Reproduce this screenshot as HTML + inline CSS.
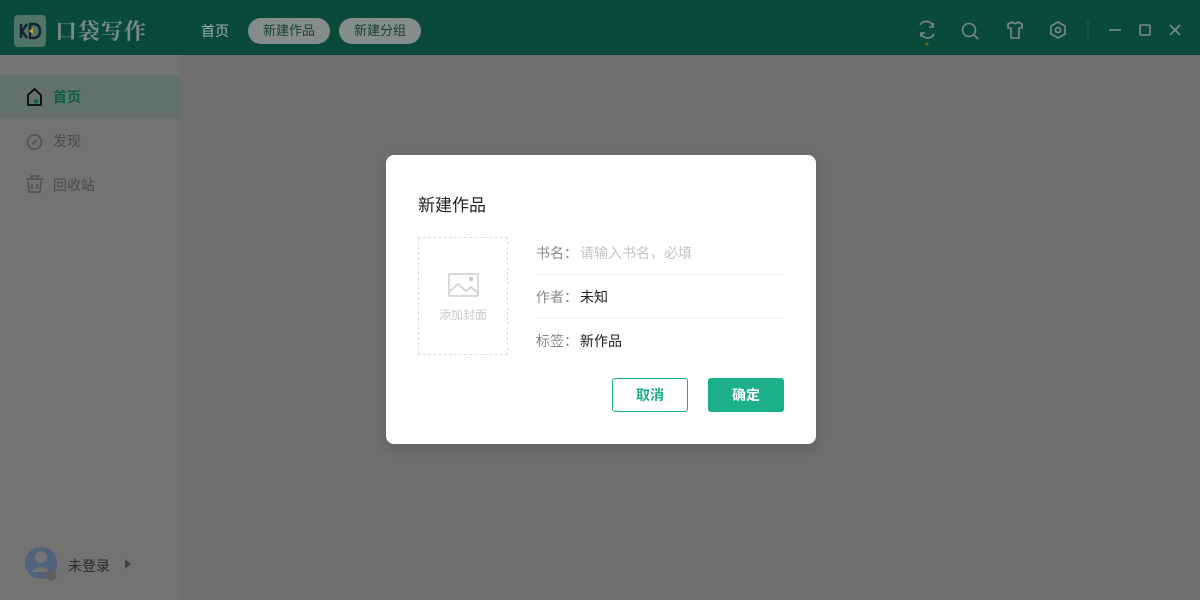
<!DOCTYPE html>
<html><head><meta charset="utf-8"><style>
*{margin:0;padding:0;box-sizing:border-box}
body{width:1200px;height:600px;overflow:hidden;font-family:"Liberation Sans","Noto Sans CJK SC",sans-serif;background:#6f6f71;position:relative}
.hdr{position:absolute;left:0;top:0;width:1200px;height:55px;background:#0a4a3b}
.logo{position:absolute;left:14px;top:15px;width:32px;height:32px;border-radius:4px;background:#4e7568}
.title{position:absolute;left:55px;top:15px;font-family:"Noto Serif CJK SC",serif;font-size:22px;color:#7a8c86;font-weight:bold;letter-spacing:1px}
.nav{position:absolute;top:18px;font-size:14px;color:#a3aeaa;line-height:26px}
.pill{background:#858d8a;color:#163f34;border-radius:13px;padding:0 15px;font-size:13px;height:26px}
.side{position:absolute;left:0;top:55px;width:179px;height:545px;background:#737373}
.item{position:absolute;left:0;width:179px;height:44px;font-size:14px;color:#4a4a4a;line-height:44px;padding-left:53px}
.item.act{background:#62716c;color:#0b5c43;font-weight:bold}
.modal{position:absolute;left:386px;top:155px;width:430px;height:289px;background:#fff;border-radius:8px;box-shadow:0 4px 16px rgba(0,0,0,.15)}
.mt{position:absolute;left:32px;top:36px;font-size:17px;color:#222}
.cover{position:absolute;left:32px;top:82px;width:90px;height:118px;border:1px dashed #ddd}
.row{position:absolute;left:150px;width:248px;height:44px;border-bottom:1px solid #eee;font-size:14px;line-height:44px;color:#888}
.row span{color:#222;margin-left:2px}
.btn{position:absolute;top:223px;width:76px;height:34px;border-radius:3px;font-size:14px;font-weight:bold;text-align:center;line-height:32px}
</style></head><body>
<div class="hdr">
 <div class="logo"><svg width="32" height="32" fill="none" stroke="#142230" stroke-width="2.4"><path d="M7 9 L7 23 M13 9 L8 16 L13 23"/><path d="M16 9 L19 9 Q26 9 26 16 Q26 23 19 23 L16 23 Z"/><path d="M15 16 L19 13 L19 19 Z" fill="#c89a3a" stroke="none"/></svg></div>
 <div class="title">口袋写作</div>
 <div class="nav" style="left:201px">首页</div>
 <div class="nav pill" style="left:248px">新建作品</div>
 <div class="nav pill" style="left:339px">新建分组</div>
 <svg style="position:absolute;left:900px;top:0" width="300" height="55" fill="none" stroke="#7c8a85" stroke-width="1.6">
  <path d="M20 25 A7 7 0 0 1 33 27 M34 34 A7 7 0 0 1 21 33 M33 23 L33 27 L29 27 M21 37 L21 33 L25 33"/>
  <circle cx="27" cy="44" r="1.5" fill="#8a5e0e" stroke="none"/>
  <circle cx="69" cy="30" r="6.5"/><path d="M74 35 L78 39"/>
  <path d="M108 24 L112 22 Q115 25 118 22 L122 24 L122 28 L119 28 L119 38 L111 38 L111 28 L108 28 Z"/>
  <path d="M158 22 L165 26 L165 34 L158 38 L151 34 L151 26 Z"/><circle cx="158" cy="30" r="2.5"/>
  <path d="M188 20 L188 40" stroke="#285f50" stroke-width="1"/>
  <path d="M209 30 L221 30"/><rect x="240" y="25" width="10" height="10" rx="1"/><path d="M270 25 L280 35 M280 25 L270 35"/>
 </svg>
</div>
<div class="side">
 <div class="item act" style="top:20px">首页</div>
 <div class="item" style="top:64px">发现</div>
 <div class="item" style="top:108px">回收站</div>
 <svg style="position:absolute;left:0;top:0" width="179" height="545" fill="none" stroke-width="1.8">
  <path d="M28 40 L34.5 34 L41 40 L41 50 L28 50 Z" stroke="#0a0a0a"/><circle cx="36" cy="46.5" r="2" fill="#0b5c43" stroke="none"/>
  <circle cx="34.5" cy="87" r="7" stroke="#555"/><path d="M32 89 L37 85" stroke="#555"/>
  <path d="M26 124 L43 124 M31 124 L31 121 L38 121 L38 124 M28 126 L29 137 L40 137 L41 126 M32 129 L32 134 M37 129 L37 134" stroke="#555"/>
  <circle cx="41" cy="508" r="16" fill="#51627c" stroke="none"/>
  <circle cx="41" cy="502" r="6" fill="#737373" stroke="none"/>
  <path d="M31 517 Q41 507 51 517" fill="#737373" stroke="none"/>
  <circle cx="51" cy="520" r="5.5" fill="#5f5f5f" stroke="none"/>
  <path d="M125 504 L131 509 L125 514 Z" fill="#444" stroke="none"/>
 </svg>
 <div style="position:absolute;left:68px;top:501px;font-size:14px;color:#2a2a2a">未登录</div>
</div>
<div class="modal">
 <div class="mt">新建作品</div>
 <div class="cover">
  <svg style="position:absolute;left:29px;top:33px" width="32" height="28" fill="none" stroke="#ccc" stroke-width="1.5"><rect x="1" y="3" width="29" height="22" rx="1"/><path d="M1 21 L10 13 L18 20 L23 16 L30 22"/><circle cx="23" cy="8" r="1.5" fill="#ccc"/></svg>
  <div style="position:absolute;left:0;top:68px;width:88px;text-align:center;font-size:12px;color:#c8c8c8">添加封面</div>
 </div>
 <div class="row" style="top:76px">书名：<span style="color:#c4c4c4">请输入书名，必填</span></div>
 <div class="row" style="top:120px">作者：<span>未知</span></div>
 <div class="row" style="top:164px;border:none">标签：<span>新作品</span></div>
 <div class="btn" style="left:226px;border:1px solid #1bb08a;color:#1bb08a">取消</div>
 <div class="btn" style="left:322px;background:#1bb08a;color:#fff;line-height:34px">确定</div>
</div>
</body></html>
